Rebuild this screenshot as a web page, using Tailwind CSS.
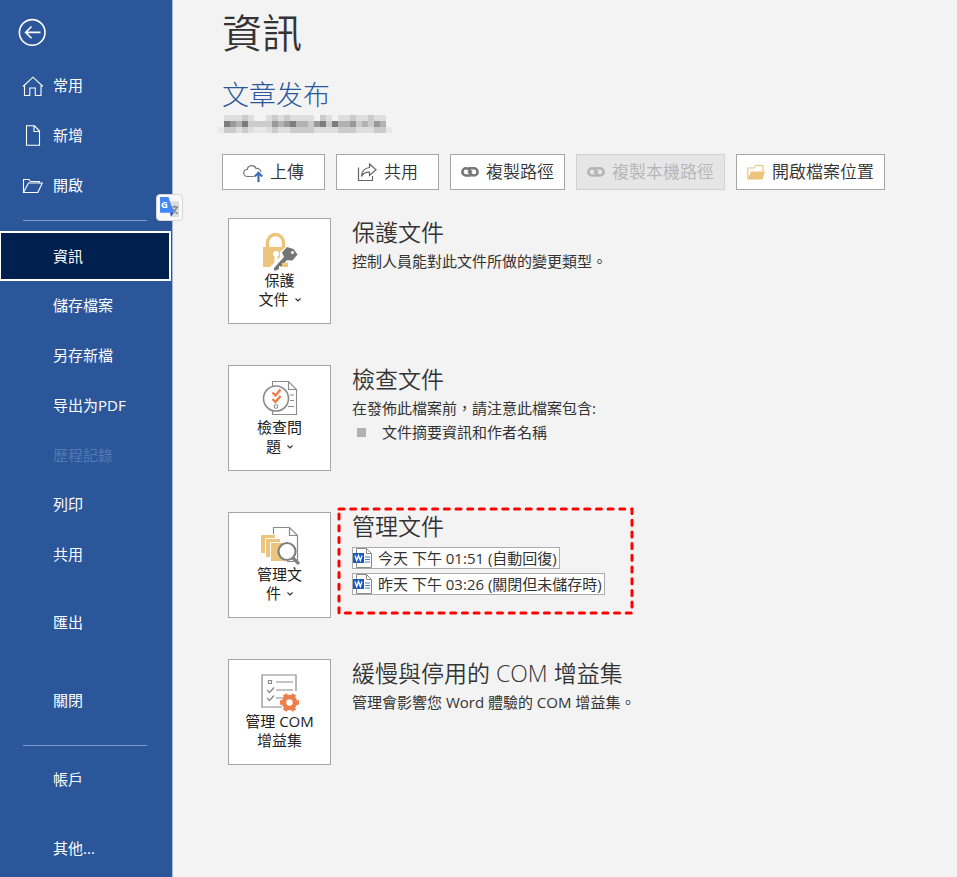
<!DOCTYPE html>
<html lang="zh-Hant">
<head>
    <meta charset="UTF-8">
    <meta name="viewport" content="width=device-width, initial-scale=1.0">
    <title>資訊 - 文章发布</title>
    <script src="https://cdn.jsdelivr.net/npm/@tailwindcss/browser@4"></script>
</head>
<body class="flex min-h-screen bg-[#f3f3f3] font-['Open_Sans','Noto_Sans_CJK_TC',sans-serif] text-[15px] text-[#333]">

    <!-- Menu lateral -->
    <aside class="relative w-[173px] shrink-0 border-r border-[#a9bbda] bg-[#2b579a] text-white">
        <button type="button" aria-label="返回" class="mt-[18px] ml-[18px] block">
            <svg class="size-7" viewBox="0 0 28 28" fill="none" stroke="currentColor" stroke-width="1.6"><circle cx="14.2" cy="14.4" r="12.8"/><path d="M22.500 14.400H8M13.500 8.500 7.600 14.400l5.900 5.900"/></svg>
        </button>
        <nav class="mt-[14px] flex flex-col">
            <a href="#" class="flex h-[50px] items-center gap-[10px] pl-[22px]">
                <svg class="size-[21px]" viewBox="0 0 21 21" fill="none" stroke="currentColor" stroke-width="1.1"><path d="M1 11.500 11 2.200l10 9.300M2.500 10.500v10h5.300v-7.500h5.500v7.500H19v-10"/></svg>
                常用
            </a>
            <a href="#" class="flex h-[50px] items-center gap-[10px] pl-[22px]">
                <svg class="size-[21px]" viewBox="0 0 21 21" fill="none" stroke="currentColor" stroke-width="1.1"><path d="M4.500.8h8l5 5.200v14.200h-13zM12 .8v5.700h5.500"/></svg>
                新增
            </a>
            <a href="#" class="flex h-[50px] items-center gap-[10px] pl-[22px]">
                <svg class="size-[21px]" viewBox="0 0 21 21" fill="none" stroke="currentColor" stroke-width="1.1"><path d="M1.500 17.500v-13h5.500l1.500 2h9V8M1.500 17.500 6.500 8h13.800l-4.500 9.500z"/></svg>
                開啟
            </a>
            <hr class="mt-[10px] mr-[25px] mb-[10px] ml-[23px] border-[#7f9bc6]">
            <a href="#" aria-current="page" class="mr-px flex h-[50px] items-center border-2 border-l border-white bg-[#00204f] pl-[52px]">資訊</a>
            <a href="#" class="flex h-[49px] items-center pl-[53px]">儲存檔案</a>
            <a href="#" class="flex h-[50px] items-center pl-[53px]">另存新檔</a>
            <a href="#" class="flex h-[50px] items-center pl-[53px]">导出为PDF</a>
            <a href="#" aria-disabled="true" class="flex h-[50px] items-center pl-[53px] text-[#5279b3]">歷程記錄</a>
            <a href="#" class="flex h-[49px] items-center pl-[53px]">列印</a>
            <a href="#" class="flex h-[50px] items-center pl-[53px]">共用</a>
            <a href="#" class="mt-[18px] flex h-[50px] items-center pl-[53px]">匯出</a>
            <a href="#" class="mt-7 flex h-[50px] items-center pl-[53px]">關閉</a>
            <hr class="mt-5 mr-[25px] mb-2 ml-[23px] border-[#7f9bc6]">
            <a href="#" class="flex h-[50px] items-center pl-[53px]">帳戶</a>
            <a href="#" class="mt-[19px] flex h-[50px] items-center pl-[53px]">其他...</a>
        </nav>

        <!-- Botão do tradutor, por cima da borda -->
        <button type="button" aria-label="翻譯" class="absolute top-[194px] left-[156px] rounded border border-[#d8d8d8] bg-[#f8f8f8] p-[2px]">
            <svg class="size-[21px]" viewBox="0 0 20 20"><path fill="#dcdcdc" d="M8 4h11v15h-8z"/><path d="M11.500 9.500h7M15 8v1.500M17 9.500c-.8 3-2.500 5-5 6.500M12.800 11c1 2.200 2.600 3.800 5 5" fill="none" stroke="#6a7783" stroke-width="1.1"/><path fill="#4285f4" d="M1 0h8l5 15H1z"/><path fill="#3048b0" d="M10.500 15H14l-2.500 3.500z"/><text x="2" y="10.500" font-size="9" font-weight="700" fill="#fff">G</text></svg>
        </button>
    </aside>

    <main class="min-w-0 flex-1 pl-[49px]">
        <h1 class="mt-2 text-[40px] leading-[50px] font-[350]">資訊</h1>
        <h2 class="mt-[19px] text-[27px] leading-9 font-light text-[#2b579a]">文章发布</h2>
        <svg class="mt-[2px] -ml-1 h-[18px] w-[174px]" viewBox="0 0 29 3" shape-rendering="crispEdges" aria-hidden="true">
            <path fill="#dedede" d="M1 0h5v1H1zM8 0h8v1H8zM17 0h2v1h-2zM20 0h8v1h-8zM1 2h27v1H1z"/>
            <path fill="#e8e8e8" d="M0 2h1v1H0zM6 2h2v1H6zM28 2h1v1h-1z"/>
            <path fill="#cbcbcb" d="M1 1h27v1H1zM4 0h1v1H4zM9 0h1v1H9zM11 0h1v1h-1zM17 0h1v1h-1zM22 0h1v1h-1zM25 0h1v1h-1zM1 2h2v1H1zM4 2h1v1H4zM9 2h1v1H9zM12 2h4v1h-4zM20 2h3v1h-3zM26 2h2v1h-2z"/>
            <path fill="#b2b2b2" d="M3 1h1v1H3zM10 1h1v1h-1zM13 1h2v1h-2zM20 1h2v1h-2zM24 1h1v1h-1zM27 1h1v1h-1z"/>
            <path fill="#999" d="M2 1h1v1H2zM9 1h1v1H9zM11 1h1v1h-1zM16 1h1v1h-1zM22 1h1v1h-1zM26 1h1v1h-1z"/>
            <path fill="#7c7c7c" d="M1 1h1v1H1zM4 1h1v1H4zM12 1h1v1h-1zM17 1h1v1h-1zM19 1h1v1h-1z"/>
        </svg>

        <div class="mt-[21px] flex flex-wrap gap-[11px] text-[17px] font-[350]">
            <button type="button" class="flex h-9 items-center gap-[7px] border border-[#a6a6a6] bg-white px-5">
                <svg class="size-5" viewBox="0 0 20 20" fill="none"><path d="M11 14.500H4.500a3.600 3.600 0 0 1-.3-7.200A4.600 4.600 0 0 1 13 6.500c2.500-.5 4.800 1 5 3.500" stroke="#777" stroke-width="1.200"/><path d="M15.500 20v-8M11.700 14.500l3.800-3.800 3.800 3.800" stroke="#3f6fb5" stroke-width="2.200"/></svg>
                上傳
            </button>
            <button type="button" class="flex h-9 items-center gap-[7px] border border-[#a6a6a6] bg-white px-5">
                <svg class="size-5" viewBox="0 0 20 20" fill="none" stroke="#666" stroke-width="1.200"><path d="M1.500 5.500v13h14V14"/><path d="M12.500 2 19 7.800l-6.500 5.700v-3.300C8.500 10 6 11.500 4.500 14.500 4.800 9.500 7.500 6 12.500 5.500z"/></svg>
                共用
            </button>
            <button type="button" class="flex h-9 items-center gap-[7px] border border-[#a6a6a6] bg-white px-[10px]">
                <svg class="h-[18px] w-[18px]" viewBox="0 0 18 18" fill="none" stroke="#777" stroke-width="2.600"><path d="M10.500 12.500H5a3.500 3.500 0 0 1 0-7.200c2.500 0 3.500 1.200 5.500 4.200"/><path d="M7.500 5.300H13a3.500 3.500 0 0 1 0 7.200c-2.500 0-3.500-1.200-5.500-4.200"/></svg>
                複製路徑
            </button>
            <button type="button" disabled class="flex h-9 items-center gap-[7px] border border-[#d2d2d2] bg-[#e6e6e6] px-[10px] text-[#b4b4b4]">
                <svg class="h-[18px] w-[18px]" viewBox="0 0 18 18" fill="none" stroke="#b4b4b4" stroke-width="2.600"><path d="M10.500 12.500H5a3.500 3.500 0 0 1 0-7.200c2.500 0 3.500 1.200 5.500 4.200"/><path d="M7.500 5.300H13a3.500 3.500 0 0 1 0 7.200c-2.500 0-3.500-1.200-5.500-4.200"/></svg>
                複製本機路徑
            </button>
            <button type="button" class="flex h-9 items-center gap-[7px] border border-[#a6a6a6] bg-white px-[10px]">
                <svg class="h-[18px] w-[18px]" viewBox="0 0 18 18"><path d="M.8 16V5H7l2-2.500h7V8" fill="none" stroke="#ecc47c" stroke-width="1.200"/><path fill="#ecc47c" d="M.5 16.500 4 8.500h14l-2.500 8z"/></svg>
                開啟檔案位置
            </button>
        </div>

        <div class="mt-7 ml-[6px] flex flex-col gap-[41px]">
            <section class="flex gap-[21px]">
                <button type="button" class="flex h-[106px] w-[103px] shrink-0 flex-col items-center border border-[#a6a6a6] bg-white pt-[13px] leading-[19px] text-[#222]">
                    <svg class="h-[39px] w-9" viewBox="0 0 36 39"><path d="M5.500 16V10.500a8 8 0 0 1 16 0V16" fill="none" stroke="#ecc47c" stroke-width="3.400"/><path fill="#ecc47c" d="M1 15h25v20H1z"/><path fill="#fff" d="M11 22a3 3 0 1 1 4.500 2.500V31h-3v-6.500A3 3 0 0 1 11 22z"/><path fill="#fff" d="m18 20 6-5.500 9 1.500 3 6-6 8-9 1-7 8h-6v-4l10-10z"/><path fill="#757575" d="m12 36 10-11-2-4.500 5-5.500 6.500 2 4 5.500-5 6-5.500-.3-3 2.800h-2v3h-3v3l-3 1.500h-2z"/><circle cx="30.500" cy="20.500" r="1.500" fill="#fff"/></svg>
                    <span>保護</span>
                    <span class="flex items-center gap-[6px]">文件 <svg class="size-[6px]" viewBox="0 0 6 6" fill="none" stroke="#333" stroke-width="1.200"><path d="m.5 1.500 2.500 2.500 2.500-2.500"/></svg></span>
                </button>
                <div>
                    <h3 class="text-[23px] leading-7 font-[350]">保護文件</h3>
                    <p class="mt-[3px] leading-6">控制人員能對此文件所做的變更類型。</p>
                </div>
            </section>

            <section class="flex gap-[21px]">
                <button type="button" class="flex h-[106px] w-[103px] shrink-0 flex-col items-center border border-[#a6a6a6] bg-white pt-[13px] leading-[19px] text-[#222]">
                    <svg class="h-[39px] w-9" viewBox="0 0 36 39" fill="none" stroke="#8a8a8a" stroke-width="1.100"><path fill="#fff" d="M10.500 2.500h16l8 8v25h-24z"/><path d="M26.500 2.500v8h8M28 16h4M28 21.500h4M26 27.500h6"/><circle cx="14" cy="19.500" r="12.500" fill="#fff" stroke-width="1.600"/><circle cx="14" cy="27.500" r="1.800"/><path d="m10.500 13.500 3 3 5-6M10.500 20l3 3 5-6" stroke="#ee7a48" stroke-width="2.300"/></svg>
                    <span>檢查問</span>
                    <span class="flex items-center gap-[6px]">題 <svg class="size-[6px]" viewBox="0 0 6 6" fill="none" stroke="#333" stroke-width="1.200"><path d="m.5 1.500 2.500 2.500 2.500-2.500"/></svg></span>
                </button>
                <div>
                    <h3 class="text-[23px] leading-7 font-[350]">檢查文件</h3>
                    <p class="mt-[3px] leading-6">在發佈此檔案前，請注意此檔案包含:</p>
                    <ul>
                        <li class="flex items-center gap-4 pl-[5px] leading-6"><span class="size-[9px] bg-[#b1b1b1]"></span>文件摘要資訊和作者名稱</li>
                    </ul>
                </div>
            </section>

            <section class="flex gap-[21px]">
                <button type="button" class="flex h-[106px] w-[103px] shrink-0 flex-col items-center border border-[#a6a6a6] bg-white pt-[13px] leading-[19px] text-[#222]">
                    <svg class="h-[39px] w-[40px]" viewBox="0 0 40 39"><path d="M13.500 10V1.500h16l8 8v26H27" fill="none" stroke="#8a8a8a" stroke-width="1.200"/><path d="M29.500 1.500v8h8" fill="none" stroke="#8a8a8a" stroke-width="1.200"/><path fill="#ecc47c" stroke="#fff" d="M.5 8.500h15v19H.5z"/><path fill="#ecc47c" stroke="#fff" d="M5.500 12.500h15v19h-15z"/><path fill="#ecc47c" stroke="#fff" d="M10.500 16.500h15v19h-15z"/><circle cx="27" cy="25.500" r="8.500" fill="#fff" stroke="#808080" stroke-width="2.200"/><path d="m33 32 6 6" stroke="#808080" stroke-width="3.200"/></svg>
                    <span>管理文</span>
                    <span class="flex items-center gap-[6px]">件 <svg class="size-[6px]" viewBox="0 0 6 6" fill="none" stroke="#333" stroke-width="1.200"><path d="m.5 1.500 2.500 2.500 2.500-2.500"/></svg></span>
                </button>
                <div class="relative">
                    <h3 class="text-[23px] leading-7 font-[350]">管理文件</h3>
                    <div class="mt-[7px] flex flex-col items-start gap-1 leading-5">
                        <a href="#" class="flex h-[22px] items-center gap-[5px] border border-[#ababab] bg-white pr-[2px]">
                            <svg class="size-5" viewBox="0 0 20 20"><path fill="#fff" stroke="#8a8a8a" d="M3.500.5h10l5 5v14h-15z"/><path fill="none" stroke="#8a8a8a" d="M13.500.5v5h5"/><path d="M12 9h5M12 11.500h5M12 14h5" stroke="#4a80d0"/><path fill="#185abd" d="M0 5h11v10H0z"/><path d="m2 7.500 1.700 5 1.800-5 1.800 5L9 7.500" fill="none" stroke="#fff" stroke-width="1.300"/></svg>
                            今天 下午 01:51 (自動回復)
                        </a>
                        <a href="#" class="flex h-[22px] items-center gap-[5px] border border-[#ababab] bg-white pr-[2px]">
                            <svg class="size-5" viewBox="0 0 20 20"><path fill="#fff" stroke="#8a8a8a" d="M3.500.5h10l5 5v14h-15z"/><path fill="none" stroke="#8a8a8a" d="M13.500.5v5h5"/><path d="M12 9h5M12 11.500h5M12 14h5" stroke="#4a80d0"/><path fill="#185abd" d="M0 5h11v10H0z"/><path d="m2 7.500 1.700 5 1.800-5 1.800 5L9 7.500" fill="none" stroke="#fff" stroke-width="1.300"/></svg>
                            昨天 下午 03:26 (關閉但未儲存時)
                        </a>
                    </div>
                    <!-- Destaque tracejado -->
                    <svg class="pointer-events-none absolute -top-[5px] -left-[15px] h-[108px] w-[298px]" viewBox="0 0 298 108" fill="none" aria-hidden="true"><rect x="2" y="2" width="293" height="104" stroke="#f00" stroke-width="3" stroke-linecap="round" stroke-dasharray="5 6.700"/></svg>
                </div>
            </section>

            <section class="flex gap-[21px]">
                <button type="button" class="flex h-[106px] w-[103px] shrink-0 flex-col items-center border border-[#a6a6a6] bg-white pt-[13px] leading-[19px] text-[#222]">
                    <svg class="h-[39px] w-[40px]" viewBox="0 0 40 39" fill="none" stroke="#8a8a8a" stroke-width="1.200"><path d="M22 34H2V2h34v16M16 9h17M16 17h17M16 25h8M8.500 7.500h3v3h-3z"/><path d="m7 17 2.500 2.500 4.500-5M7 25l2.500 2.500 4.500-5" stroke-width="1.400"/><circle cx="29.500" cy="29.500" r="5.500" stroke="#ee7f4c" stroke-width="4.600"/><path d="M20 29.500h3M36 29.500h3M24.800 21.300l1.500 2.600M32.700 35.100l1.500 2.600M34.200 21.300l-1.500 2.600M26.300 35.100l-1.500 2.600" stroke="#ee7f4c" stroke-width="4.500"/></svg>
                    <span>管理 COM</span>
                    <span>增益集</span>
                </button>
                <div>
                    <h3 class="text-[23px] leading-7 font-[350]">緩慢與停用的 COM 增益集</h3>
                    <p class="mt-[3px] leading-6">管理會影響您 Word 體驗的 COM 增益集。</p>
                </div>
            </section>
        </div>
    </main>
</body>
</html>
